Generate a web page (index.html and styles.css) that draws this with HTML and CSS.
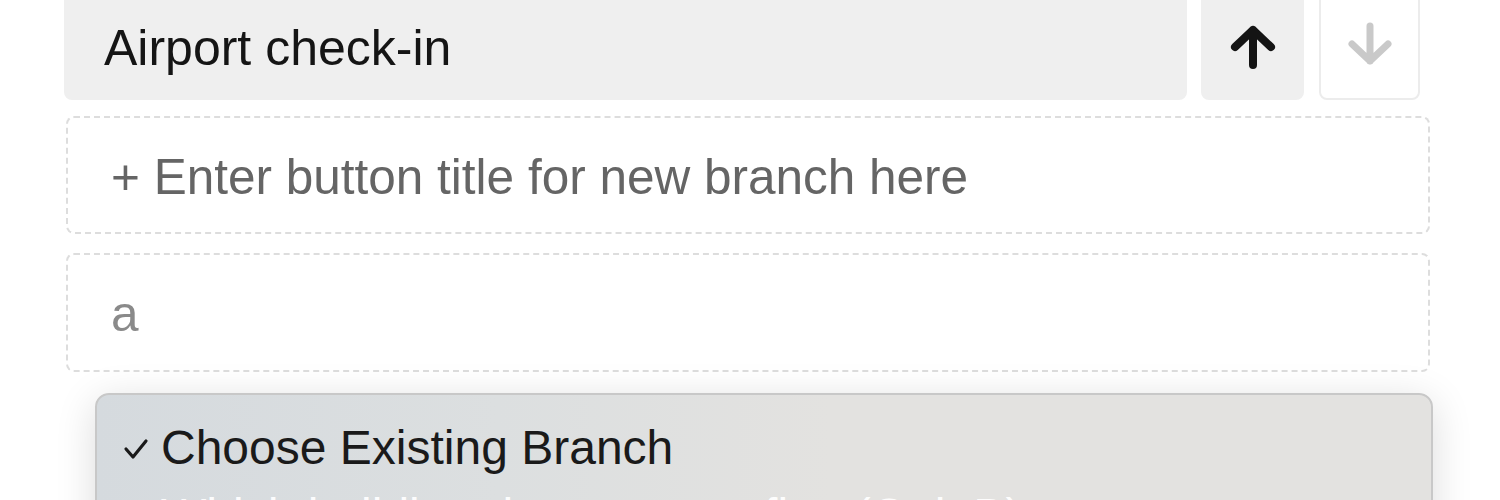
FILE: index.html
```html
<!DOCTYPE html>
<html lang="en">
<head>
<meta charset="utf-8">
<title>Branch editor</title>
<link rel="stylesheet" href="styles.css">
</head>
<body>
<div class="panel">
  <div class="row">
    <div class="title-box">Airport check-in</div>
    <button class="move-btn up" aria-label="Move up">
      <svg width="48" height="44" viewBox="0 0 48 44"><path d="M24 40 V5 M6 22 L24 5 L42 22" fill="none" stroke="#141414" stroke-width="8" stroke-linecap="round" stroke-linejoin="round"/></svg>
    </button>
    <button class="move-btn down" aria-label="Move down">
      <svg width="48" height="44" viewBox="0 0 48 44"><path d="M24 4 V39 M6 22 L24 39 L42 22" fill="none" stroke="#c9c9c9" stroke-width="7" stroke-linecap="round" stroke-linejoin="round"/></svg>
    </button>
  </div>
  <div class="dashed-box new-branch">+ Enter button title for new branch here</div>
  <div class="dashed-box search">a</div>
  <div class="dropdown">
    <div class="option selected">
      <svg class="check" width="26" height="22" viewBox="0 0 26 22"><path d="M3 11 L10 19 L23 3" fill="none" stroke="#1a1a1a" stroke-width="3.2" stroke-linecap="round" stroke-linejoin="round"/></svg>
      <span>Choose Existing Branch</span>
    </div>
    <div class="option light"><span>Which building do you go to first (Ctrl+B)</span></div>
  </div>
</div>
</body>
</html>
```

FILE: styles.css
```css
html, body {
  margin: 0;
  padding: 0;
  background: #ffffff;
  overflow: hidden;
}

body {
  font-family: "Liberation Sans", Arial, Helvetica, sans-serif;
}

.panel {
  padding-left: 64px;
  margin-top: -20px;
  width: 1380px;
}

.row {
  display: flex;
  align-items: stretch;
  height: 120px;
}

.title-box {
  box-sizing: border-box;
  width: 1123px;
  height: 120px;
  padding: 40px 0 0 40px;
  background: #efefef;
  border-radius: 8px;
  font-size: 50px;
  line-height: 56px;
  color: #151515;
  white-space: nowrap;
}

.move-btn {
  box-sizing: border-box;
  height: 120px;
  padding: 14px 0 0 0;
  border: none;
  border-radius: 8px;
  display: flex;
  align-items: center;
  justify-content: center;
  font: inherit;
}

.move-btn.up {
  width: 103px;
  margin-left: 14px;
  background: #efefef;
}

.move-btn.down {
  width: 101px;
  margin-left: 15px;
  background: #ffffff;
  border: 2px solid #ececec;
  padding-top: 8px;
}

.dashed-box {
  box-sizing: border-box;
  width: 1364px;
  margin-left: 2px;
  border: 2px dashed #dddddd;
  border-radius: 8px;
  padding: 31px 0 0 43px;
  font-size: 49.5px;
  line-height: 56px;
  white-space: nowrap;
}

.new-branch {
  height: 118px;
  margin-top: 16px;
  color: #656565;
}

.search {
  height: 119px;
  margin-top: 19px;
  color: #8a8a8a;
}

.dropdown {
  box-sizing: border-box;
  width: 1338px;
  height: 220px;
  margin-top: 21px;
  margin-left: 31px;
  padding: 25px 0 0 26px;
  background: linear-gradient(90deg, #d5dade 0%, #dcdfe0 30%, #e3e2e0 55%, #e3e2e0 100%);
  border: 2px solid #c8c8c8;
  border-radius: 14px;
  box-shadow: 0 8px 40px rgba(0, 0, 0, 0.14);
  overflow: hidden;
}

.option {
  display: flex;
  align-items: center;
  font-size: 48px;
  line-height: 56px;
  white-space: nowrap;
}

.option.selected {
  color: #1a1a1a;
}

.check {
  margin-right: 12px;
  margin-top: 2px;
}

.option.light {
  color: rgba(255, 255, 255, 0.95);
  padding-left: 38px;
  margin-top: 12px;
}
```
